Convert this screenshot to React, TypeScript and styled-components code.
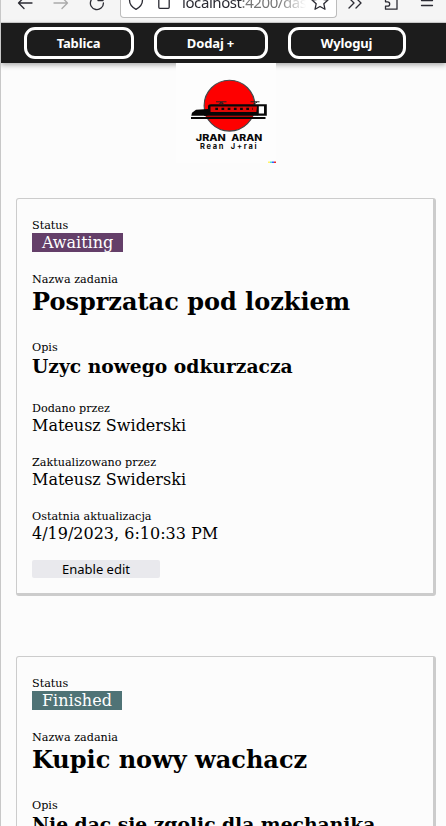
import React from "react";
import styled, { createGlobalStyle } from "styled-components";

const GlobalStyle = createGlobalStyle`
  *, *::before, *::after { box-sizing: border-box; }
  html, body { margin: 0; height: 826px; overflow: hidden; background: #fcfcfc; }
`;

const Window = styled.div`
  height: 826px;
  overflow: hidden;
  border-left: 1px solid #c8c8c8;
  background: #fcfcfc;
  color: #000;
  font-family: "DejaVu Serif", serif;
`;

const BrowserBar = styled.div`
  height: 23px;
  display: flex;
  overflow: hidden;
  background: #f5f5f5;
  border-bottom: 1px solid #ccc;
`;

const ChromeIcons = styled.svg<{ $width: number }>`
  display: block;
  flex: none;
  width: ${(p) => p.$width}px;
  height: 22px;
  fill: none;
  stroke: #2b2b33;
  stroke-width: 1.3;
  stroke-linecap: round;
  stroke-linejoin: round;
`;

const AddressBar = styled.div`
  display: flex;
  width: 217px;
  height: 18px;
  flex: none;
  background: #fff;
  border: 1px solid #bcbcbc;
  border-top: 0;
  border-radius: 0 0 4px 4px;
`;

const Address = styled.div`
  width: 124px;
  height: 25px;
  margin-top: -8px;
  overflow: hidden;
  white-space: nowrap;
  font: 15px/20px "Noto Sans", sans-serif;
  letter-spacing: -0.42px;
  color: #777;
  mask-image: linear-gradient(90deg, #000 78%, transparent 100%);
`;

const Host = styled.span`
  color: #2b2b33;
`;

const NavBar = styled.nav`
  position: relative;
  height: 40px;
  display: flex;
  align-items: center;
  gap: 20px;
  padding-left: 23px;
  background: #1c1c1c;
  box-shadow: 0 2px 5px #aaa;
`;

const NavButton = styled.button<{ $width: number }>`
  width: ${(p) => p.$width}px;
  height: 32px;
  padding: 0 1px 1px 0;
  border: 3px solid #fff;
  border-radius: 11px;
  background: transparent;
  color: #fff;
  font: bold 13px/18px "Noto Sans", sans-serif;
  letter-spacing: -0.15px;
`;

const Logo = styled.svg`
  position: relative;
  display: block;
  width: 100px;
  height: 100px;
  margin-left: 175px;
`;

const Tasks = styled.main`
  display: flex;
  flex-direction: column;
  gap: 60px;
  padding: 35px 10px 0 15px;
`;

const Card = styled.article`
  height: 398px;
  flex: none;
  padding: 20px 15px 0;
  border: 1px solid #ccc;
  border-right-width: 3px;
  border-bottom-width: 3px;
  border-radius: 3px;
`;

const Field = styled.section`
  display: flex;
  flex-direction: column;
  align-items: flex-start;
  margin-bottom: 21px;
`;

const Label = styled.div`
  height: 14px;
  font-size: 11.2px;
  line-height: 13px;
`;

const Value = styled.div`
  height: 19px;
  font-size: 16px;
  line-height: 19px;
  white-space: nowrap;
`;

const Badge = styled(Value)<{ $color: string }>`
  padding: 0 10px;
  background: ${(p) => p.$color};
  color: #fff;
`;

const Title = styled.h2`
  height: 33px;
  margin: 0;
  font-size: 24px;
  line-height: 29px;
  white-space: nowrap;
`;

const Description = styled.h3`
  height: 26px;
  margin: 0;
  font-size: 18.72px;
  line-height: 23px;
  white-space: nowrap;
`;

const EditButton = styled.button`
  display: block;
  width: 128px;
  height: 18px;
  margin-top: -4px;
  padding: 0;
  border: 0;
  border-radius: 2px;
  background: #e9e9ed;
  color: #000;
  font: 13px/18px "Noto Sans", sans-serif;
  letter-spacing: 0;
`;

interface Task {
  status: string;
  color: string;
  title: string;
  description: string;
}

const tasks: Task[] = [
  { status: "Awaiting", color: "#643f69", title: "Posprzatac pod lozkiem", description: "Uzyc nowego odkurzacza" },
  { status: "Finished", color: "#4f7376", title: "Kupic nowy wachacz", description: "Nie dac sie zgolic dla mechanika" },
];

function TaskCard({ task }: { task: Task }) {
  return (
    <Card>
      <Field><Label>Status</Label><Badge $color={task.color}>{task.status}</Badge></Field>
      <Field><Label>Nazwa zadania</Label><Title>{task.title}</Title></Field>
      <Field><Label>Opis</Label><Description>{task.description}</Description></Field>
      <Field><Label>Dodano przez</Label><Value>Mateusz Swiderski</Value></Field>
      <Field><Label>Zaktualizowano przez</Label><Value>Mateusz Swiderski</Value></Field>
      <Field><Label>Ostatnia aktualizacja</Label><Value>4/19/2023, 6:10:33 PM</Value></Field>
      <EditButton>Enable edit</EditButton>
    </Card>
  );
}

function TrainLogo() {
  return (
    <Logo viewBox="0 0 100 100" fill="none" aria-label="Jran Aran">
      <rect width="100" height="100" fill="#fdfdfd" />
      <circle cx="53.5" cy="42.7" r="25.4" fill="#fe0000" stroke="#42494b" strokeWidth="1.1" />
      <path d="M15.3 52.8 16 49.8 20 46.8 32 46V43.5Q32 41.3 35 41.3H90.8V52.8H82L80.5 50H34L31 52.8Z" fill="#080808" />
      <path d="M34.5 43.6H81L80.3 49H34.5Z" fill="#e00705" />
      <path d="M39.3 45.9H77" stroke="#080808" strokeWidth="2.3" strokeDasharray="2.7 3.5" />
      <rect x="82.8" y="43.3" width="5.2" height="7.2" fill="#fdfdfd" />
      <rect x="28" y="49" width="54" height="3.8" fill="#080808" />
      <path d="M29.8 53.4H77" stroke="#a50908" strokeWidth="1" />
      <path d="M15 55H89.5" stroke="#080808" strokeWidth="2" />
      <path d="M40 38.8H50.5M42.5 41.3 46.8 39.2M44 39.2 48 41.3M74.5 38.8H83.5M77 41.3 81 39.2" stroke="#222" strokeWidth="1" />
      <g fill="#090909" fontFamily="Inter, sans-serif">
        <text x="19.8" y="78.3" fontSize="8.8" fontWeight="800" textLength="30" lengthAdjust="spacingAndGlyphs">JRAN</text>
        <text x="55.3" y="78.3" fontSize="8.8" fontWeight="800" textLength="31" lengthAdjust="spacingAndGlyphs">ARAN</text>
        <text x="24" y="86.4" fontSize="7.5" fontWeight="700" textLength="23.5" lengthAdjust="spacing">Rean</text>
        <text x="54.8" y="86.4" fontSize="7.5" fontWeight="700" textLength="25.7" lengthAdjust="spacing">J+rai</text>
      </g>
      <path d="M92 99.2H94" stroke="#fff46b" strokeWidth="1.6" />
      <path d="M94 99.2H96" stroke="#4de4cf" strokeWidth="1.6" />
      <path d="M96 99.2H98" stroke="#375dff" strokeWidth="1.6" />
      <path d="M98 99.2H100" stroke="#e82c2c" strokeWidth="1.6" />
    </Logo>
  );
}

export default function App() {
  return (
    <>
      <GlobalStyle />
      <Window>
        <BrowserBar>
          <ChromeIcons $width={119} viewBox="1 0 119 22">
            <path d="M32 3H18.5M24-2.5 18.5 3 24 8.5" />
            <path d="M54 3H67.5M62-2.5 67.5 3 62 8.5" stroke="#aaa" />
            <path d="M103.4 3A6.5 6.5 0 1 1 100.5-2.3M98 .5H103V-4" />
          </ChromeIcons>
          <AddressBar>
            <ChromeIcons $width={61} viewBox="121 0 61 22">
              <path d="M129.5-3V0C129.5 5 132.5 7.5 136 9.3C139.5 7.5 142.5 5 142.5 0V-3" />
              <rect x="158.8" y="-2" width="10.4" height="10.3" rx="1" />
            </ChromeIcons>
            <Address><Host>localhost</Host>:4200/das</Address>
            <ChromeIcons $width={30} viewBox="306 0 30 22">
              <path d="M320-6 322.3-.7 328 0 323.8 3.7 325 9.3 320 6.5 315 9.3 316.2 3.7 312 0 317.7-.7Z" />
            </ChromeIcons>
          </AddressBar>
          <ChromeIcons $width={108} viewBox="337 0 108 22">
            <path d="M349-2 354 3 349 8M356-2 361 3 356 8" />
            <path d="M385-2H397V9.2H385.5V6.2H387.5A2.2 2.2 0 0 0 387.5 1.8H385.5V-2" />
            <path d="M421.5 .5H432.5M421.5 5.5H432.5" />
          </ChromeIcons>
        </BrowserBar>
        <NavBar>
          <NavButton $width={110}>Tablica</NavButton>
          <NavButton $width={114}>Dodaj +</NavButton>
          <NavButton $width={118}>Wyloguj</NavButton>
        </NavBar>
        <TrainLogo />
        <Tasks>{tasks.map((task) => <TaskCard key={task.title} task={task} />)}</Tasks>
      </Window>
    </>
  );
}
